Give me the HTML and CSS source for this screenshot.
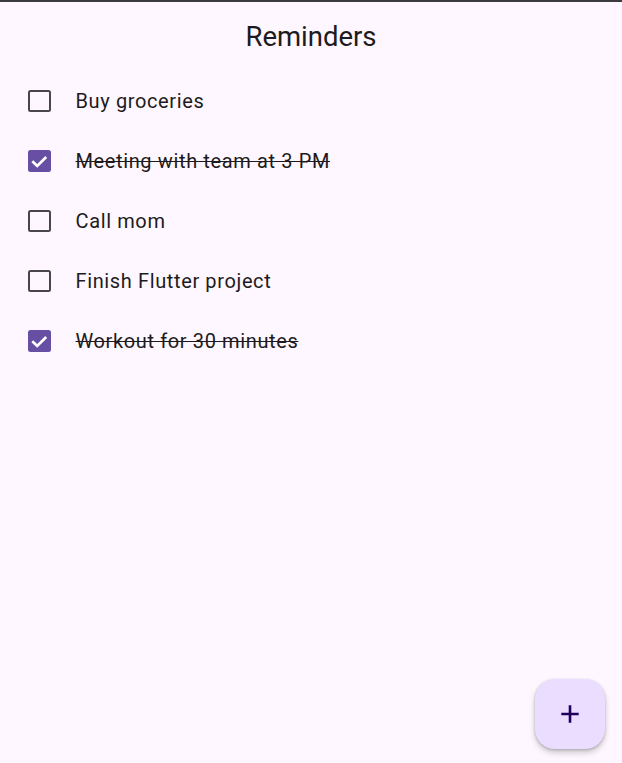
FILE: index.html
```html
<!DOCTYPE html>
<html>
<head>
<meta charset="utf-8">
<link rel="stylesheet" href="styles.css">
</head>
<body>
<div class="topline"></div>
<header class="appbar"><h1 class="title">Reminders</h1></header>
<ul class="list">
  <li class="tile">
    <span class="cb"></span>
    <span class="label">Buy groceries</span>
  </li>
  <li class="tile done">
    <span class="cb checked"><svg viewBox="0 0 22 22" width="22.5" height="22.5"><path d="M4.2 11 L9 15.6 L17.8 6.8" fill="none" stroke="#fff" stroke-width="2.6"/></svg></span>
    <span class="label">Meeting with team at 3 PM</span>
  </li>
  <li class="tile">
    <span class="cb"></span>
    <span class="label">Call mom</span>
  </li>
  <li class="tile">
    <span class="cb"></span>
    <span class="label">Finish Flutter project</span>
  </li>
  <li class="tile done">
    <span class="cb checked"><svg viewBox="0 0 22 22" width="22.5" height="22.5"><path d="M4.2 11 L9 15.6 L17.8 6.8" fill="none" stroke="#fff" stroke-width="2.6"/></svg></span>
    <span class="label">Workout for 30 minutes</span>
  </li>
</ul>
<button class="fab" aria-label="Add"><svg viewBox="0 0 30 30" width="30" height="30"><path d="M15 6.3 V23.7 M6.3 15 H23.7" stroke="#21005d" stroke-width="2.6" fill="none"/></svg></button>
</body>
</html>
```
FILE: styles.css
```css
html, body {
  margin: 0;
  padding: 0;
  height: 100%;
}
body {
  background: #fef7ff;
  font-family: Roboto, "Liberation Sans", sans-serif;
  color: #1d1b20;
  position: relative;
  overflow: hidden;
}
.topline {
  height: 2px;
  background: #3c3b3e;
}
.appbar {
  height: 69px;
  display: flex;
  align-items: center;
  justify-content: center;
  padding-bottom: 1px;
  box-sizing: border-box;
}
.title {
  margin: 0;
  font-size: 27.5px;
  font-weight: 400;
  line-height: 35px;
}
.list {
  list-style: none;
  margin: 0;
  padding: 0;
}
.tile {
  height: 60px;
  display: flex;
  align-items: center;
  padding-left: 28px;
}
.cb {
  width: 22.5px;
  height: 22.5px;
  box-sizing: border-box;
  border: 2.5px solid #49454f;
  border-radius: 2.5px;
  flex: none;
  display: flex;
  align-items: center;
  justify-content: center;
}
.cb.checked {
  background: #6750a4;
  border: none;
}
.cb svg {
  flex: none;
  display: block;
}
.label {
  margin-left: 25px;
  font-size: 20px;
  letter-spacing: 0.625px;
  line-height: 30px;
}
.done .label {
  text-decoration: line-through;
  text-decoration-thickness: 1.3px;
}
.fab {
  position: absolute;
  right: 17px;
  bottom: 14px;
  width: 70px;
  height: 70px;
  border: none;
  border-radius: 20px;
  background: #eaddff;
  box-shadow: 0 4px 6px rgba(0,0,0,0.18), 0 1px 3px rgba(0,0,0,0.2);
  display: flex;
  align-items: center;
  justify-content: center;
  padding: 0;
}
```
